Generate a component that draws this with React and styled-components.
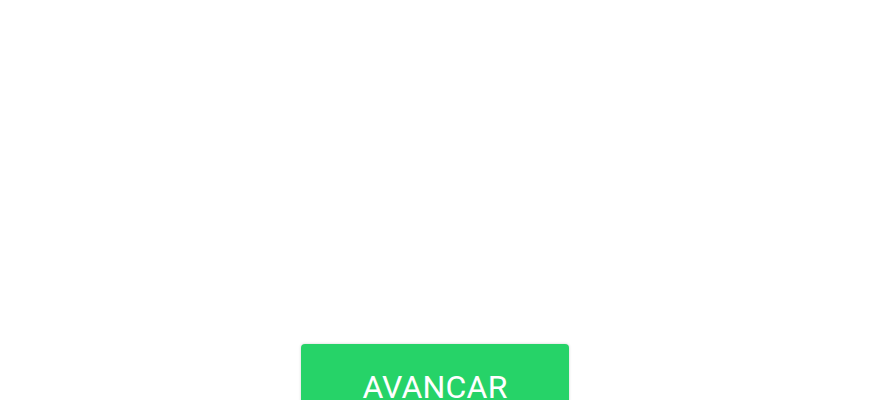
import styled, { createGlobalStyle } from 'styled-components';

const GlobalStyle = createGlobalStyle`
  html, body {
    margin: 0;
    padding: 0;
    background: #ffffff;
    font-family: Roboto, "Liberation Sans", sans-serif;
  }
`;

function App() {
  return (
    <Page>
      <GlobalStyle />
      <Content />
      <Actions>
        <Button type="button">AVANCAR</Button>
      </Actions>
    </Page>
  );
}

const Page = styled.main`
  display: flex;
  flex-direction: column;
  width: 870px;
  height: 400px;
  overflow: hidden;
  background: #ffffff;
`;

const Content = styled.section`
  height: 344px;
  flex-shrink: 0;
`;

const Actions = styled.div`
  display: flex;
  justify-content: center;
`;

const Button = styled.button`
  width: 268px;
  height: 90px;
  flex-shrink: 0;
  padding: 24px 0 0;
  display: flex;
  justify-content: center;
  align-items: flex-start;
  border: none;
  border-radius: 4px;
  background: #26d368;
  color: #ffffff;
  font-family: Roboto, "Liberation Sans", sans-serif;
  font-size: 32px;
  font-weight: 400;
  letter-spacing: 0.2px;
  box-shadow: 0 0 3px rgb(0 0 0 / 0.18);
  cursor: pointer;
`;

export default App;
